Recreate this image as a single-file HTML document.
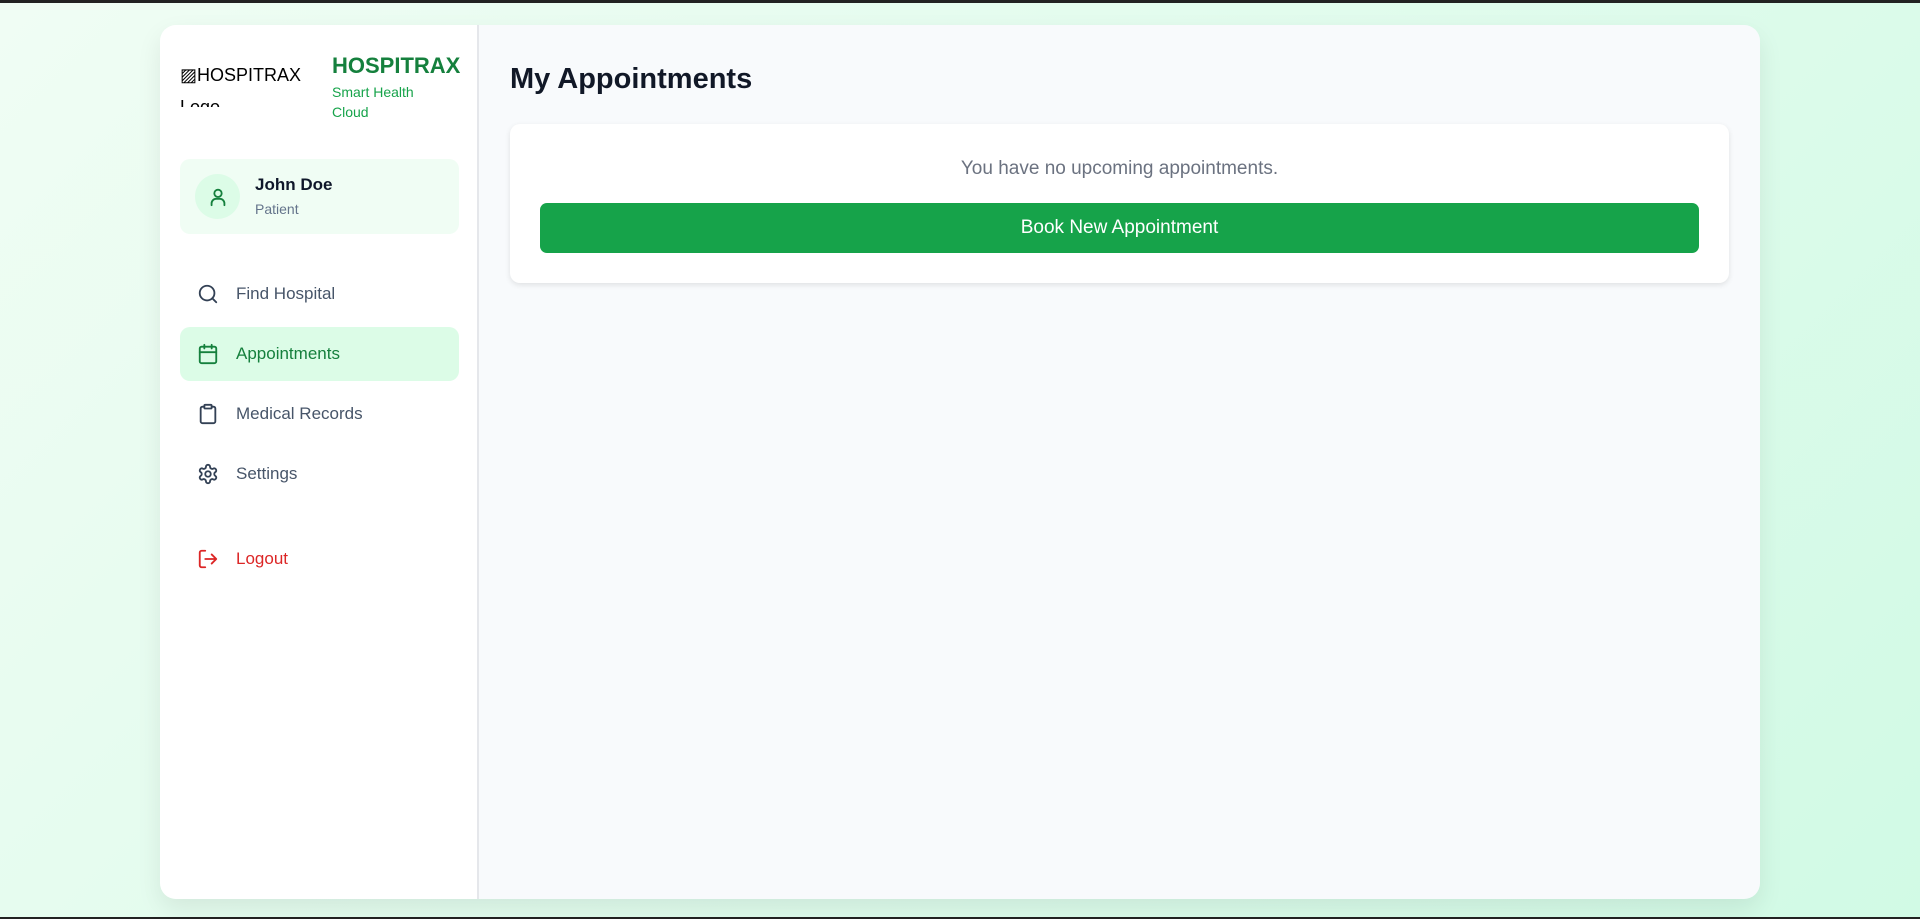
<!DOCTYPE html>
<html><head><meta charset="utf-8"><style>
*{box-sizing:border-box;margin:0;padding:0}
html,body{width:1920px;height:919px;overflow:hidden}
body{font-family:"Liberation Sans",sans-serif;background:linear-gradient(135deg,#f0fdf4,#d1fae5);border-top:3px solid #222;border-bottom:2px solid #222;position:relative}
.wrap{position:absolute;left:160px;top:22px;width:1600px;height:874px;border-radius:16px;overflow:hidden;box-shadow:0 10px 25px rgba(0,0,0,.08);display:flex}
.side{width:319px;background:#fff;border-right:2px solid #e5e7eb;position:relative}
.main{flex:1;background:#f8fafc;position:relative}
.logoimg{position:absolute;left:20px;top:34px;width:125px;height:48px;overflow:hidden;font-size:18px;color:#000;line-height:32px}
.brand{position:absolute;left:172px;top:28px;font-size:22px;font-weight:bold;color:#15803d}
.tag{position:absolute;left:172px;top:57px;font-size:14px;color:#16a34a;line-height:20px;width:110px}
.user{position:absolute;left:20px;top:134px;width:279px;height:75px;background:#f0fdf4;border-radius:10px}
.av{position:absolute;left:15px;top:15px;width:45px;height:45px;border-radius:50%;background:#dcfce7;display:flex;align-items:center;justify-content:center}
.un{position:absolute;left:75px;top:16px;font-size:17px;font-weight:bold;color:#0f172a}
.ur{position:absolute;left:75px;top:42px;font-size:14px;color:#64748b}
.nav{position:absolute;left:20px;width:279px;height:54px;border-radius:10px;display:flex;align-items:center;font-size:17px;color:#475569}
.nav svg{margin-left:17px;margin-right:17px}
.act{background:#dcfce7;color:#15803d}
h1{position:absolute;left:31px;top:36px;line-height:36px;font-size:29px;font-weight:bold;color:#111827}
.card{position:absolute;left:31px;top:99px;width:1219px;height:159px;background:#fff;border-radius:10px;box-shadow:0 2px 6px rgba(0,0,0,.1)}
.msg{position:absolute;top:34px;width:100%;text-align:center;font-size:19px;color:#6b7280}
.btn{position:absolute;left:30px;top:79px;width:1159px;height:50px;background:#16a34a;border-radius:7px;color:#fff;font-size:19px;display:flex;align-items:center;justify-content:center}
</style></head><body>
<div class="wrap">
<div class="side">
<div class="logoimg">▨HOSPITRAX<br>Logo</div>
<div class="brand">HOSPITRAX</div>
<div class="tag">Smart Health Cloud</div>
<div class="user"><div class="av"><svg width="22" height="22" viewBox="0 0 24 24" fill="none" stroke="#15803d" stroke-width="2" stroke-linecap="round"><circle cx="12" cy="8" r="4"/><path d="M5 21v-2a5 5 0 0 1 5-5h4a5 5 0 0 1 5 5v2"/></svg></div><div class="un">John Doe</div><div class="ur">Patient</div></div>
<div class="nav" style="top:242px"><svg width="22" height="22" viewBox="0 0 24 24" fill="none" stroke="#334155" stroke-width="2" stroke-linecap="round"><circle cx="11" cy="11" r="8"/><path d="M21 21l-4.3-4.3"/></svg>Find Hospital</div>
<div class="nav act" style="top:302px"><svg width="22" height="22" viewBox="0 0 24 24" fill="none" stroke="#15803d" stroke-width="2" stroke-linecap="round"><rect x="3" y="4" width="18" height="18" rx="2"/><path d="M8 2v4M16 2v4M3 10h18"/></svg>Appointments</div>
<div class="nav" style="top:362px"><svg width="22" height="22" viewBox="0 0 24 24" fill="none" stroke="#334155" stroke-width="2" stroke-linecap="round"><rect x="8" y="2" width="8" height="4" rx="1"/><path d="M16 4h2a2 2 0 0 1 2 2v14a2 2 0 0 1-2 2H6a2 2 0 0 1-2-2V6a2 2 0 0 1 2-2h2"/></svg>Medical Records</div>
<div class="nav" style="top:422px"><svg width="22" height="22" viewBox="0 0 24 24" fill="none" stroke="#334155" stroke-width="2" stroke-linecap="round" stroke-linejoin="round"><path d="M12.22 2h-.44a2 2 0 0 0-2 2v.18a2 2 0 0 1-1 1.73l-.43.25a2 2 0 0 1-2 0l-.15-.08a2 2 0 0 0-2.73.73l-.22.38a2 2 0 0 0 .73 2.73l.15.1a2 2 0 0 1 1 1.72v.51a2 2 0 0 1-1 1.74l-.15.09a2 2 0 0 0-.73 2.73l.22.38a2 2 0 0 0 2.73.73l.15-.08a2 2 0 0 1 2 0l.43.25a2 2 0 0 1 1 1.73V20a2 2 0 0 0 2 2h.44a2 2 0 0 0 2-2v-.18a2 2 0 0 1 1-1.73l.43-.25a2 2 0 0 1 2 0l.15.08a2 2 0 0 0 2.73-.73l.22-.39a2 2 0 0 0-.73-2.73l-.15-.08a2 2 0 0 1-1-1.74v-.5a2 2 0 0 1 1-1.74l.15-.09a2 2 0 0 0 .73-2.730l-.22-.38a2 2 0 0 0-2.73-.73l-.15.08a2 2 0 0 1-2 0l-.43-.25a2 2 0 0 1-1-1.73V4a2 2 0 0 0-2-2z"/><circle cx="12" cy="12" r="3"/></svg>Settings</div>
<div class="nav" style="top:507px;color:#dc2626"><svg width="22" height="22" viewBox="0 0 24 24" fill="none" stroke="#dc2626" stroke-width="2" stroke-linecap="round" stroke-linejoin="round"><path d="M9 21H5a2 2 0 0 1-2-2V5a2 2 0 0 1 2-2h4M16 17l5-5-5-5M21 12H9"/></svg>Logout</div>
</div>
<div class="main">
<h1>My Appointments</h1>
<div class="card"><div class="msg">You have no upcoming appointments.</div><div class="btn">Book New Appointment</div></div>
</div>
</div>
</body></html>
